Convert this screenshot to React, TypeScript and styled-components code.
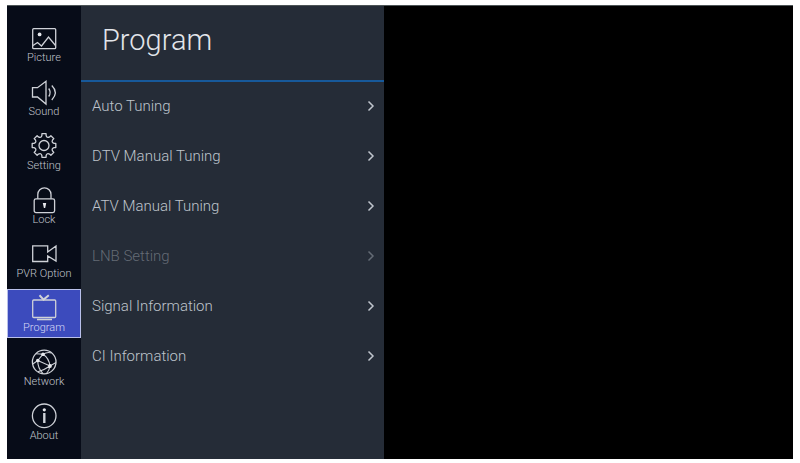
import React from "react";
import styled, { createGlobalStyle } from "styled-components";

const GlobalStyle = createGlobalStyle`
  * { box-sizing: border-box; }
  body {
    margin: 0;
    background: #fff;
    font-family: Roboto, "Liberation Sans", sans-serif;
    font-weight: 300;
  }
`;

const Page = styled.div`
  display: flex;
  min-height: 100vh;
  padding: 5px 7px 4px;
`;

const Screen = styled.main`
  display: flex;
  flex: 1;
  background: #000;
  border-top: 1px solid #4c5456;
`;

const Sidebar = styled.nav`
  display: flex;
  flex-direction: column;
  gap: 5px;
  width: 74px;
  padding: 13px 0 0;
  background: #070c18;
`;

const Tab = styled.button<{ $active: boolean }>`
  display: flex;
  flex-direction: column;
  align-items: center;
  height: 49px;
  padding: 5px 0 0;
  border: 1px solid ${(p) => (p.$active ? "#b9c0ea" : "transparent")};
  background: ${(p) => (p.$active ? "#3c4bbd" : "transparent")};
  color: ${(p) => (p.$active ? "#d5daf6" : "#c0c4cc")};
  font: inherit;
  font-size: 11px;
  line-height: 13px;
  white-space: nowrap;
`;

const Icon = styled.svg`
  flex: none;
  width: 26px;
  height: 26px;
  fill: none;
  stroke: #cfd2d8;
  stroke-width: 1.3;
  overflow: visible;

  .solid { fill: #e6e8ec; stroke: none; }
`;

const Panel = styled.section`
  width: 303px;
  background: #252c37;
`;

const Title = styled.h1`
  margin: 0;
  height: 76px;
  padding: 14px 21px 0;
  border-bottom: 2px solid #17599a;
  color: #e2e5ea;
  font-size: 29px;
  font-weight: 300;
  line-height: 40px;
`;

const Menu = styled.ul`
  margin: 0;
  padding: 0;
  list-style: none;
`;

const Row = styled.button`
  display: flex;
  align-items: center;
  justify-content: space-between;
  width: 100%;
  height: 50px;
  padding: 0 9px 2px 11px;
  border: 0;
  background: transparent;
  color: #bfc4cc;
  font: inherit;
  font-size: 15px;

  &:disabled { color: #646b75; }
`;

const Chevron = styled.svg`
  width: 8px;
  height: 12px;
  fill: none;
  stroke: currentColor;
  stroke-width: 1.5;
`;

const gearPath = (() => {
  const cx = 13;
  const cy = 12.5;
  const teeth = 8;
  const pt = (r: number, deg: number) => {
    const a = (deg * Math.PI) / 180;
    return `${(cx + r * Math.cos(a)).toFixed(2)} ${(cy + r * Math.sin(a)).toFixed(2)}`;
  };
  let d = "";
  for (let i = 0; i < teeth; i++) {
    const a = i * 45 - 90;
    d += `${i ? "L" : "M"}${pt(12, a - 10)}L${pt(12, a + 10)}L${pt(10.2, a + 12)}Q${pt(7.8, a + 22.5)} ${pt(10.2, a + 33)}`;
  }
  return d + "Z";
})();

const tabs: { label: string; icon: React.ReactNode }[] = [
  {
    label: "Picture",
    icon: (
      <>
        <rect x="1.7" y="3.7" width="23" height="20" rx="1" />
        <path d="M2 20.5 6.5 17.5 10.5 21 17.5 12 24.5 20.5" />
        <circle className="solid" cx="8.6" cy="9.4" r="1.9" />
      </>
    ),
  },
  {
    label: "Sound",
    icon: (
      <>
        <path d="M1.5 8.7H6.5L15 2.3V25L6.5 18H1.5Z" />
        <path d="M17.7 9.5Q20.6 13.5 17.7 17.5M20.8 6.5Q27.8 13.5 20.8 21" />
      </>
    ),
  },
  {
    label: "Setting",
    icon: (
      <>
        <path d={gearPath} strokeLinejoin="round" />
        <circle cx="13" cy="12.5" r="5" />
      </>
    ),
  },
  {
    label: "Lock",
    icon: (
      <>
        <rect x="3.2" y="11.8" width="20.4" height="13.8" rx="1.8" />
        <path d="M6.8 11.8V7.4A6.6 6.6 0 0 1 20 7.4V11.8" />
        <path className="solid" d="M11.8 16H15.2L14.2 21H12.9Z" />
      </>
    ),
  },
  {
    label: "PVR Option",
    icon: <path d="M1.7 4.8H16.7V11L25 5V20L16.7 15V20.5H1.7Z" />,
  },
  {
    label: "Program",
    icon: (
      <>
        <rect x="1.7" y="5" width="23" height="17.5" rx="1" />
        <path d="M6 24.5H21" strokeWidth="1.6" />
        <path d="M8.5 0.3 12.6 4.6 17.8 0.3" strokeWidth="2" />
      </>
    ),
  },
  {
    label: "Network",
    icon: (
      <>
        <circle cx="13.2" cy="13" r="11.8" />
        <path d="M5 4.8 12 5.2 6.8 11.5 19 17 25 13.5M12 5.2Q18 9 19 17Q18.5 21 15.5 24.5M12 5.2Q16.5 2.5 20.5 4M6.8 11.5Q6.5 19 12 24.6M6.8 11.5 1.8 15M19 17Q14 20.5 7 22.8" strokeWidth="1.1" />
        <circle className="solid" cx="12" cy="5.2" r="1.7" />
        <circle className="solid" cx="6.8" cy="11.5" r="1.8" />
        <circle className="solid" cx="19" cy="17" r="1.9" />
      </>
    ),
  },
  {
    label: "About",
    icon: (
      <>
        <circle cx="13.2" cy="12.8" r="11.8" />
        <path d="M13.3 10V20" strokeWidth="2.4" />
        <circle className="solid" cx="13.3" cy="6.8" r="1.6" />
      </>
    ),
  },
];

const rows = [
  { label: "Auto Tuning" },
  { label: "DTV Manual Tuning" },
  { label: "ATV Manual Tuning" },
  { label: "LNB Setting", disabled: true },
  { label: "Signal Information" },
  { label: "CI Information" },
];

export default function App() {
  const [active, setActive] = React.useState("Program");
  return (
    <Page>
      <GlobalStyle />
      <Screen>
        <Sidebar aria-label="Settings sections">
          {tabs.map((t) => (
            <Tab
              key={t.label}
              type="button"
              $active={t.label === active}
              aria-current={t.label === active ? "page" : undefined}
              onClick={() => setActive(t.label)}
            >
              <Icon viewBox="0 0 26 26" aria-hidden="true">{t.icon}</Icon>
              {t.label}
            </Tab>
          ))}
        </Sidebar>
        <Panel>
          <Title>Program</Title>
          <Menu>
            {rows.map((r) => (
              <li key={r.label}>
                <Row type="button" disabled={r.disabled}>
                  {r.label}
                  <Chevron viewBox="0 0 8 12" aria-hidden="true">
                    <path d="M1.5 1.5 6 6 1.5 10.5" />
                  </Chevron>
                </Row>
              </li>
            ))}
          </Menu>
        </Panel>
      </Screen>
    </Page>
  );
}
